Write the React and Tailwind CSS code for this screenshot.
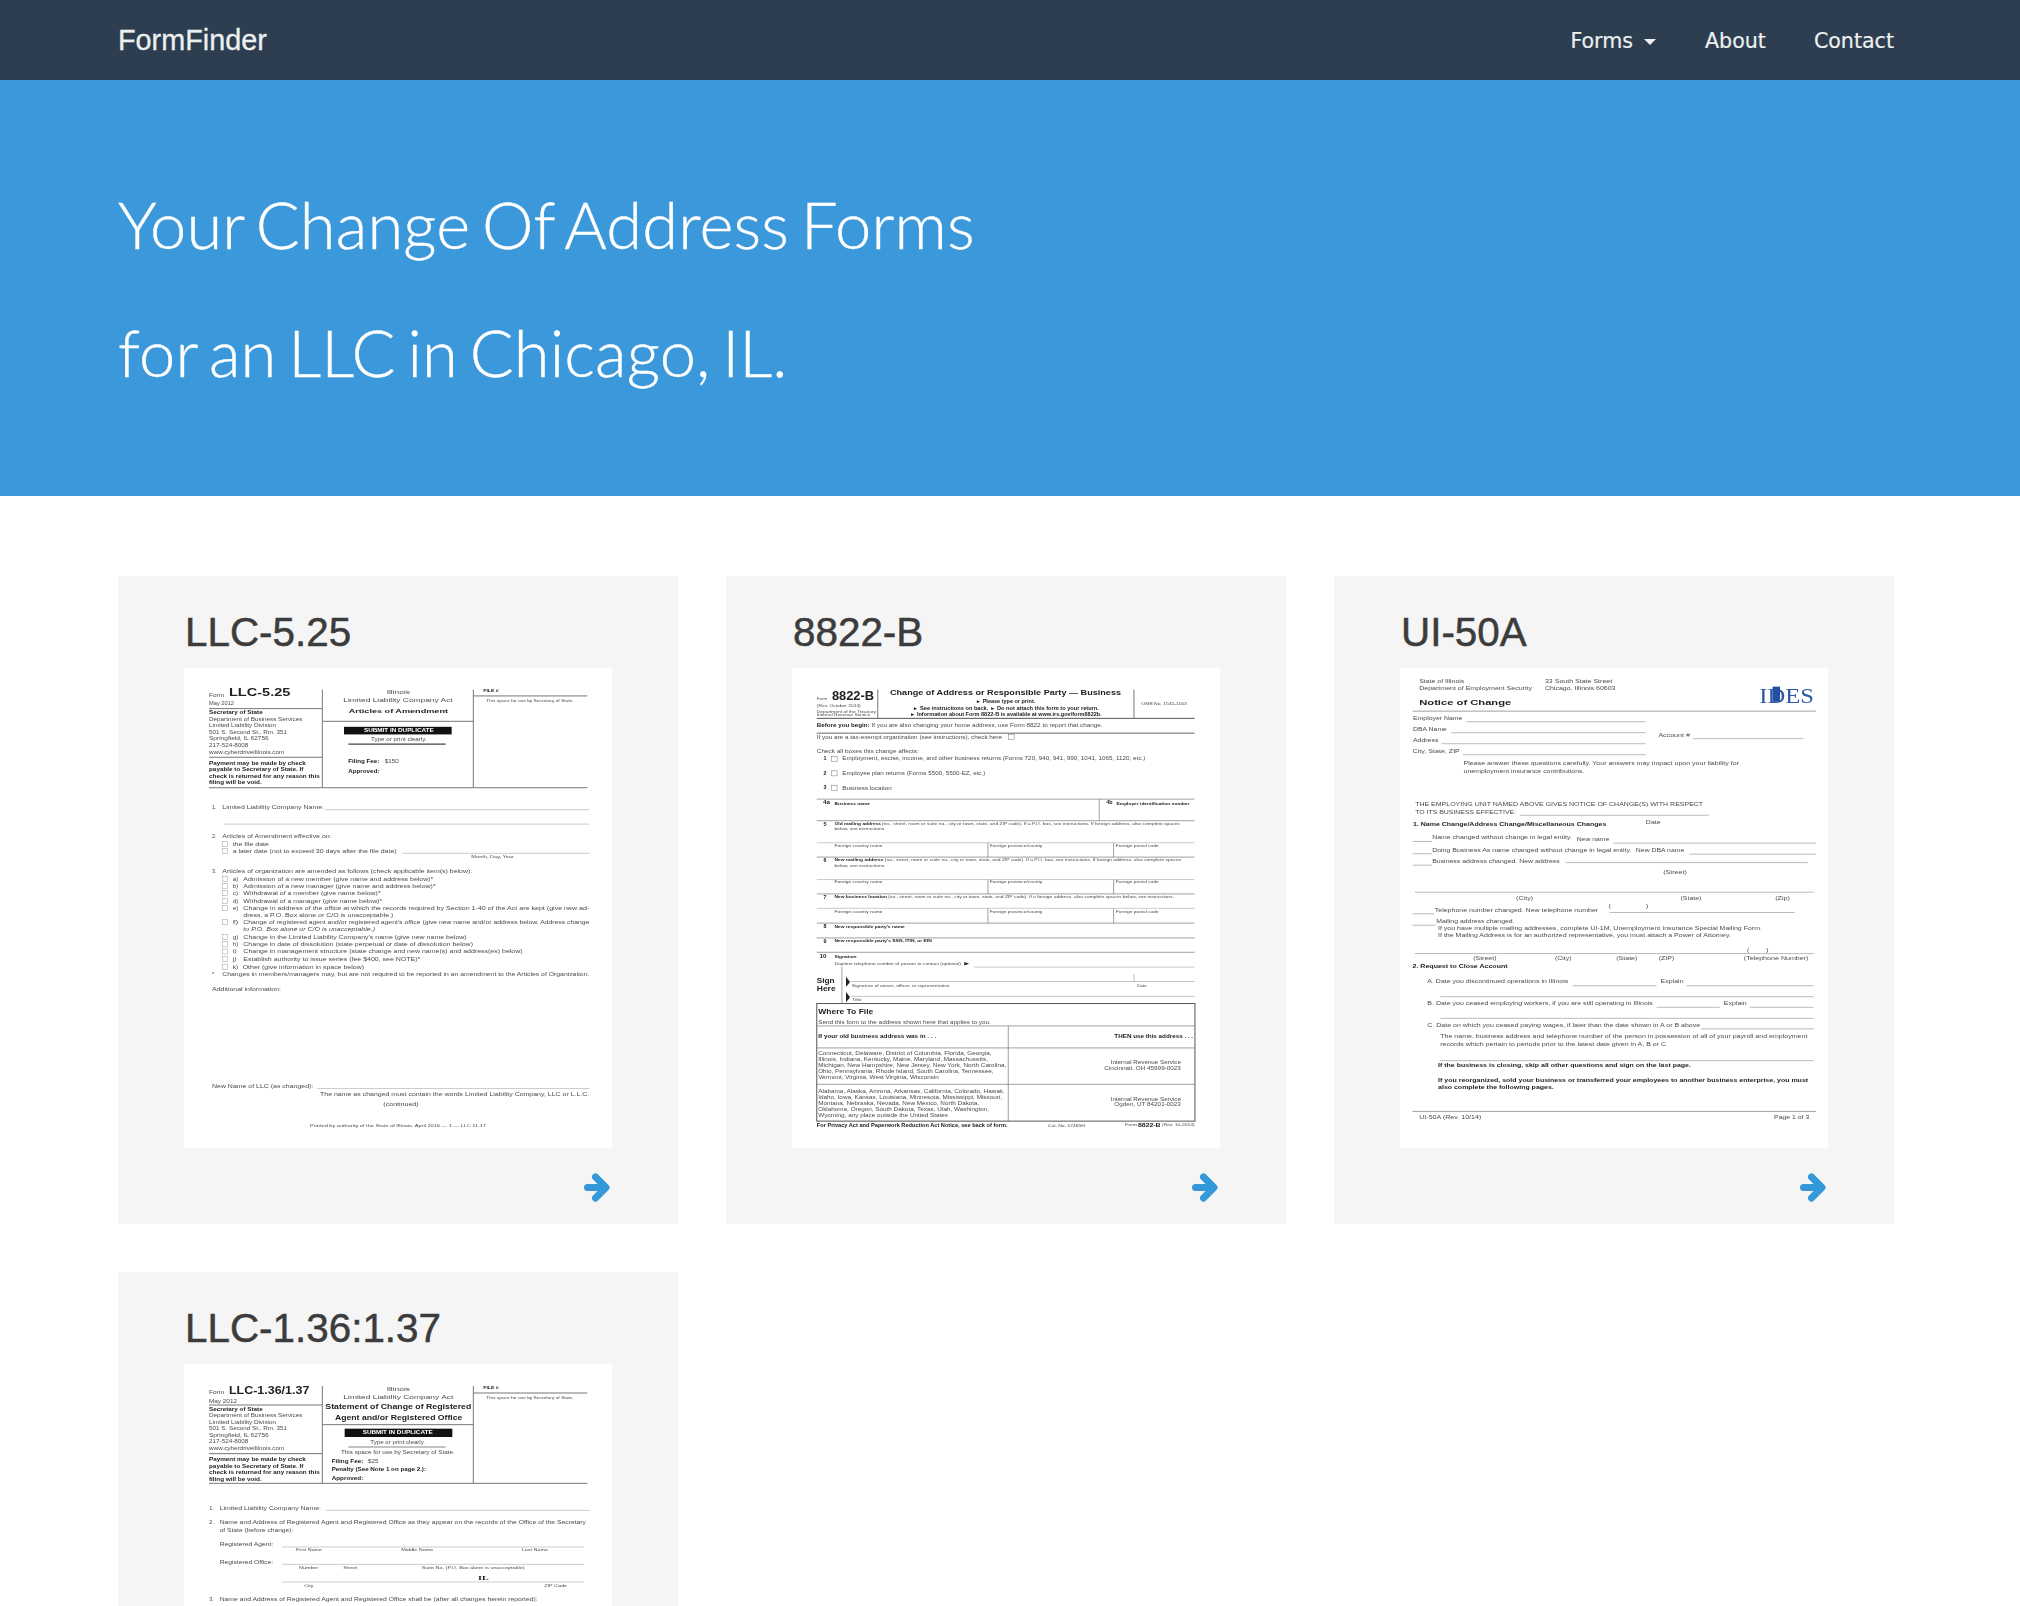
import React from "react";

const T = (a, b, y, s, o = {}) => ({ k: "t", a, b, y, s, ...o });
const H = (a, b, y, w = 1, c = "#777") => ({ k: "h", a, b, y, w, c });
const V = (x, a, b, w = 1, c = "#777") => ({ k: "v", x, a, b, w, c });
const R = (a, b, y1, y2, f = "#111") => ({ k: "r", a, b, y1, y2, f });
const BOX = (a, b, y1, y2, w = 1, c = "#888") => ({ k: "b", a, b, y1, y2, w, c });
const TRI = (a, b, y1, y2) => ({ k: "p", a, b, y1, y2 });
const bd = { bold: 1 };

const leftBlock = (ys) => [
  T(297, 458, ys[0], "Secretary of State", bd),
  T(297, 577, ys[1], "Department of Business Services"),
  T(297, 498, ys[2], "Limited Liability Division"),
  T(297, 531, ys[3], "501 S. Second St., Rm. 351"),
  T(297, 476, ys[4], "Springfield, IL  62756"),
  T(297, 415, ys[5], "217-524-8008"),
  T(297, 523, ys[6], "www.cyberdriveillinois.com"),
  T(297, 587, ys[7], "Payment may be made by check", bd),
  T(297, 580, ys[8], "payable to Secretary of State. If", bd),
  T(297, 629, ys[9], "check is returned for any reason this", bd),
  T(297, 455, ys[10], "filing will be void.", bd),
];

const chk = (y, x = 338, w = 14) => BOX(x, x + w, y - 6, y + 6, 0.5, "#999");

const doc1 = [
  T(297, 342, 298, "Form"),
  T(357, 541, 292, "LLC-5.25", { bold: 1, z: 11 }),
  T(297, 372, 316, "May 2012"),
  V(637, 285, 517), V(1090, 285, 517),
  H(297, 637, 330), H(637, 1090, 360), H(297, 637, 445), H(297, 1432, 517), H(1090, 1432, 300),
  ...leftBlock([339, 355, 369, 385, 401, 417, 433, 458, 474, 490, 505]),
  T(830, 900, 291, "Illinois"),
  T(700, 1028, 310, "Limited Liability Company Act"),
  T(716, 1014, 337, "Articles of Amendment", bd),
  R(702, 1025, 373, 391),
  T(762, 971, 382, "SUBMIT IN DUPLICATE", { bold: 1, c: "#fff", z: 5 }),
  T(783, 950, 402, "Type or print clearly."),
  H(715, 1007, 414, 1.2, "#444"),
  T(715, 808, 454, "Filing Fee:", bd), T(824, 866, 454, "$150"),
  T(715, 808, 479, "Approved:", bd),
  T(1120, 1166, 288, "FILE #", { bold: 1, z: 4 }),
  T(1129, 1391, 312, "This space for use by Secretary of State.", { z: 4 }),
  T(306, 320, 563, "1."), T(337, 642, 563, "Limited Liability Company Name:"),
  H(646, 1438, 569, 0.5, "#999"), H(342, 1438, 603, 0.5, "#999"),
  T(306, 320, 632, "2."), T(337, 665, 632, "Articles of Amendment effective on:"),
  chk(650), T(368, 477, 650, "the file date"),
  chk(667), T(368, 860, 667, "a later date (not to exceed 30 days after the file date)"),
  H(878, 1438, 672, 0.5, "#999"), T(1084, 1212, 681, "Month, Day, Year", { z: 4 }),
  T(306, 320, 714, "3."), T(337, 1087, 714, "Articles of organization are amended as follows (check applicable item(s) below):"),
  chk(732), T(368, 385, 732, "a)"), T(400, 970, 732, "Admission of a new member (give name and address below)*"),
  chk(749), T(368, 385, 749, "b)"), T(400, 977, 749, "Admission of a new manager (give name and address below)*"),
  chk(766), T(368, 385, 766, "c)"), T(400, 812, 766, "Withdrawal of a member (give name below)*"),
  chk(784), T(368, 385, 784, "d)"), T(400, 817, 784, "Withdrawal of a manager (give name below)*"),
  chk(801), T(368, 385, 801, "e)"), T(400, 1438, 801, "Change in address of the office at which the records required by Section 1-40 of the Act are kept (give new ad-"),
  T(400, 850, 818, "dress, a P.O. Box alone or C/O is unacceptable.)"),
  chk(835), T(368, 385, 835, "f)"), T(400, 1438, 835, "Change of registered agent and/or registered agent's office (give new name and/or address below. Address change"),
  T(400, 795, 852, "to P.O. Box alone or C/O is unacceptable.)", { i: 1 }),
  chk(870), T(368, 385, 870, "g)"), T(400, 1070, 870, "Change in the Limited Liability Company's name (give new name below)"),
  chk(887), T(368, 385, 887, "h)"), T(400, 1089, 887, "Change in date of dissolution (state perpetual or date of dissolution below)"),
  chk(904), T(368, 380, 904, "i)"), T(400, 1238, 904, "Change in management structure (state change and new name(s) and address(es) below)"),
  chk(922), T(368, 380, 922, "j)"), T(400, 931, 922, "Establish authority to issue series (fee $400, see NOTE)*"),
  chk(940), T(368, 385, 940, "k)"), T(398, 762, 940, "Other (give information in space below)"),
  T(306, 313, 958, "*"), T(337, 1438, 958, "Changes in members/managers may, but are not required to be reported in an amendment to the Articles of Organization."),
  T(306, 513, 992, "Additional information:"),
  T(306, 610, 1222, "New Name of LLC (as changed):"), H(622, 1438, 1228, 0.5, "#999"),
  T(630, 1438, 1241, "The name as changed must contain the words Limited Liability Company, LLC or L.L.C."),
  T(820, 926, 1265, "(continued)"),
  T(600, 1128, 1316, "Printed by authority of the State of Illinois. April 2016 — 1 — LLC 11.17", { z: 4 }),
];

const foreignRow = (yLine, yT, yEnd) => [
  H(262, 1284, yLine, 0.5, "#999"),
  T(310, 440, yT, "Foreign country name", { z: 4 }),
  V(725, yLine, yEnd, 0.7),
  T(730, 872, yT, "Foreign province/county", { z: 4 }),
  V(1065, yLine, yEnd, 0.7),
  T(1071, 1187, yT, "Foreign postal code", { z: 4 }),
  H(262, 1284, yEnd, 0.7, "#777"),
];

const doc2 = [
  T(262, 290, 306, "Form", { z: 4 }),
  T(303, 417, 299, "8822-B", { bold: 1, z: 12 }),
  V(427, 285, 352), V(1120, 285, 352),
  T(262, 381, 322, "(Rev. October 2014)", { z: 4 }),
  T(262, 422, 336, "Department of the Treasury", { z: 4 }),
  T(262, 407, 345, "Internal Revenue Service", { z: 4 }),
  T(460, 1085, 292, "Change of Address or Responsible Party — Business", { bold: 1, z: 8 }),
  T(692, 853, 313, "► Please type or print.", { bold: 1, z: 4.6 }),
  T(522, 1025, 329, "► See instructions on back.   ► Do not attach this form to your return.", { bold: 1, z: 4.6 }),
  T(514, 1033, 344, "► Information about Form 8822-B is available at www.irs.gov/form8822b.", { bold: 1, z: 4.6 }),
  T(1140, 1263, 318, "OMB No. 1545-1163", { z: 4 }),
  H(262, 1284, 353, 1, "#555"),
  T(262, 405, 369, "Before you begin:", bd),
  T(410, 1035, 369, "If you are also changing your home address, use Form 8822 to report that change."),
  H(262, 1284, 388, 1, "#666"),
  T(262, 763, 397, "If you are a tax-exempt organization (see instructions), check here"),
  BOX(780, 796, 391, 403, 0.5, "#777"),
  T(262, 538, 431, "Check all boxes this change affects:"),
  T(280, 288, 447, "1", bd), BOX(302, 317, 443, 455, 0.5, "#777"),
  T(331, 1151, 448, "Employment, excise, income, and other business returns (Forms 720, 940, 941, 990, 1041, 1065, 1120, etc.)"),
  T(280, 288, 482, "2", bd), BOX(302, 317, 477, 489, 0.5, "#777"),
  T(331, 718, 483, "Employee plan returns (Forms 5500, 5500-EZ, etc.)"),
  T(280, 288, 516, "3", bd), BOX(302, 317, 511, 523, 0.5, "#777"),
  T(331, 465, 517, "Business location"),
  H(262, 1284, 544, 0.7),
  T(279, 298, 552, "4a", { bold: 1, z: 4.5 }), T(310, 406, 554, "Business name", { bold: 1, z: 4 }),
  V(1026, 544, 595, 0.7),
  T(1045, 1062, 552, "4b", { bold: 1, z: 4.5 }), T(1073, 1270, 554, "Employer identification number", { bold: 1, z: 4 }),
  H(262, 1284, 595, 0.7),
  T(280, 288, 602, "5", bd), T(310, 436, 602, "Old mailing address", { bold: 1, z: 4 }),
  T(438, 1244, 602, "(no., street, room or suite no., city or town, state, and ZIP code). If a P.O. box, see instructions. If foreign address, also complete spaces", { z: 4 }),
  T(310, 448, 614, "below, see instructions.", { z: 4 }),
  ...foreignRow(647, 653, 681),
  T(280, 288, 688, "6", bd), T(310, 442, 688, "New mailing address", { bold: 1, z: 4 }),
  T(446, 1248, 688, "(no., street, room or suite no., city or town, state, and ZIP code). If a P.O. box, see instructions. If foreign address, also complete spaces", { z: 4 }),
  T(310, 448, 700, "below, see instructions.", { z: 4 }),
  ...foreignRow(734, 740, 768),
  T(280, 288, 775, "7", bd), T(310, 452, 775, "New business location", { bold: 1, z: 4 }),
  T(455, 1228, 775, "(no., street, room or suite no., city or town, state, and ZIP code). If a foreign address, also complete spaces below, see instructions.", { z: 4 }),
  ...foreignRow(802, 809, 837),
  T(280, 288, 845, "8", bd), T(310, 500, 845, "New responsible party's name", { bold: 1, z: 4 }),
  H(262, 1284, 872, 0.7),
  T(280, 288, 879, "9", bd), T(310, 573, 879, "New responsible party's SSN, ITIN, or EIN", { bold: 1, z: 4 }),
  H(262, 1284, 906, 0.7),
  T(270, 288, 915, "10", bd), T(310, 370, 917, "Signature", { bold: 1, z: 4 }),
  T(310, 652, 933, "Daytime telephone number of person to contact (optional)", { z: 4 }),
  TRI(661, 674, 929, 937),
  H(686, 1284, 941, 0.5, "#999"),
  T(262, 310, 973, "Sign", { bold: 1, z: 7 }), T(262, 313, 991, "Here", { bold: 1, z: 7 }),
  V(330, 941, 1027, 0.7),
  TRI(341, 352, 964, 988), H(355, 1284, 975, 0.5, "#888"), V(1120, 958, 975, 0.5),
  T(357, 621, 984, "Signature of owner, officer, or representative", { z: 3.6 }), T(1129, 1155, 984, "Date", { z: 3.6 }),
  TRI(341, 352, 1000, 1024), H(355, 1284, 1010, 0.5, "#888"), T(358, 383, 1018, "Title", { z: 3.6 }),
  BOX(262, 1285, 1027, 1305, 1, "#555"),
  T(266, 415, 1046, "Where To File", { bold: 1, z: 6.5 }),
  T(266, 733, 1071, "Send this form to the address shown here that applies to you."),
  H(262, 1285, 1080, 0.7), V(780, 1080, 1305, 0.7),
  T(266, 585, 1104, "If your old business address was in . . .", bd),
  T(1067, 1280, 1104, "THEN use this address . . .", bd),
  H(262, 1285, 1132, 0.7),
  T(266, 735, 1144, "Connecticut, Delaware, District of Columbia, Florida, Georgia,"),
  T(266, 725, 1158, "Illinois, Indiana, Kentucky, Maine, Maryland, Massachusetts,"),
  T(266, 775, 1172, "Michigan, New Hampshire, New Jersey, New York, North Carolina,"),
  T(266, 740, 1186, "Ohio, Pennsylvania, Rhode Island, South Carolina, Tennessee,"),
  T(266, 592, 1200, "Vermont, Virginia, West Virginia, Wisconsin"),
  T(1057, 1247, 1166, "Internal Revenue Service"), T(1040, 1247, 1179, "Cincinnati, OH 45999-0023"),
  H(262, 1285, 1218, 0.7),
  T(266, 770, 1234, "Alabama, Alaska, Arizona, Arkansas, California, Colorado, Hawaii,"),
  T(266, 763, 1248, "Idaho, Iowa, Kansas, Louisiana, Minnesota, Mississippi, Missouri,"),
  T(266, 702, 1262, "Montana, Nebraska, Nevada, New Mexico, North Dakota,"),
  T(266, 728, 1276, "Oklahoma, Oregon, South Dakota, Texas, Utah, Washington,"),
  T(266, 617, 1290, "Wyoming, any place outside the United States"),
  T(1057, 1247, 1252, "Internal Revenue Service"), T(1067, 1247, 1265, "Ogden, UT 84201-0023"),
  T(262, 778, 1314, "For Privacy Act and Paperwork Reduction Act Notice, see back of form.", bd),
  T(887, 987, 1315, "Cat. No. 57465H", { z: 4 }),
  T(1096, 1128, 1314, "Form", { z: 4 }), T(1131, 1192, 1313, "8822-B", { bold: 1, z: 6 }), T(1196, 1284, 1314, "(Rev. 10-2014)", { z: 4 }),
];

const blank = (a, y) => H(222, a, y, 0.5, "#777");
const ln = (a, b, y) => H(a, b, y, 0.5, "#777");

const doc3 = [
  T(240, 362, 265, "State of Illinois"),
  T(240, 545, 282, "Department of Employment Security"),
  T(580, 762, 265, "33 South State Street"),
  T(580, 771, 282, "Chicago, Illinois 60603"),
  T(240, 489, 315, "Notice of Change", { bold: 1, z: 8 }),
  T(1160, 1308, 300, "IDES", { f: "'Liberation Serif', serif", z: 21, c: "#2a5aa8" }),
  R(1196, 1216, 278, 314, "#24509f"),
  H(222, 1313, 336, 0.7),
  T(223, 357, 352, "Employer Name"), ln(367, 853, 361),
  T(223, 315, 378, "DBA Name"), ln(326, 853, 387),
  T(223, 292, 405, "Address"), ln(300, 853, 413),
  T(222, 350, 431, "City, State, ZIP"), ln(358, 853, 439),
  T(887, 972, 392, "Account #"), ln(981, 1279, 401),
  T(360, 1105, 459, "Please answer these questions carefully. Your answers may impact upon your liability for"),
  T(360, 687, 477, "unemployment insurance contributions."),
  T(229, 1008, 557, "THE EMPLOYING UNIT NAMED ABOVE GIVES NOTICE OF CHANGE(S) WITH RESPECT"),
  T(229, 502, 574, "TO ITS BUSINESS EFFECTIVE:"), ln(512, 1024, 582),
  T(223, 746, 602, "1. Name Change/Address Change/Miscellaneous Changes", bd),
  T(853, 893, 598, "Date"),
  blank(274, 644), T(275, 653, 635, "Name changed without change in legal entity."),
  T(666, 754, 638, "New name"), ln(765, 1313, 648),
  blank(274, 673), T(275, 814, 664, "Doing Business As name changed without change in legal entity."),
  T(826, 957, 664, "New DBA name"), ln(971, 1313, 674),
  blank(274, 700), T(275, 620, 690, "Business address changed. New address"), ln(636, 1291, 694),
  T(900, 964, 717, "(Street)"),
  ln(228, 1307, 764),
  T(502, 548, 778, "(City)"), T(947, 1003, 778, "(State)"), T(1203, 1243, 778, "(Zip)"),
  blank(280, 815), T(282, 724, 807, "Telephone number changed. New telephone number"),
  T(752, 758, 797, "("), T(853, 860, 797, ")"), ln(755, 1256, 812),
  blank(285, 842), T(286, 498, 832, "Mailing address changed."),
  T(291, 1167, 849, "If you have multiple mailing addresses, complete UI-1M, Unemployment Insurance Special Mailing Form."),
  T(291, 1083, 866, "If the Mailing Address is for an authorized representative, you must attach a Power of Attorney."),
  T(1127, 1133, 902, "("), T(1178, 1185, 902, ")"),
  ln(228, 1307, 909),
  T(386, 449, 921, "(Street)"), T(607, 652, 921, "(City)"), T(773, 830, 921, "(State)"), T(888, 930, 921, "(ZIP)"),
  T(1118, 1293, 921, "(Telephone Number)"),
  T(222, 479, 939, "2. Request to Close Account", bd),
  T(262, 643, 975, "A. Date you discontinued operations in Illinois"), ln(655, 882, 985),
  T(893, 955, 975, "Explain"), ln(963, 1307, 985), ln(297, 1307, 1011),
  T(262, 872, 1027, "B. Date you ceased employing workers, if you are still operating in Illinois"), ln(882, 1053, 1036),
  T(1064, 1126, 1027, "Explain"), ln(1134, 1307, 1036), ln(297, 1307, 1062),
  T(262, 1000, 1079, "C. Date on which you ceased paying wages, if later than the date shown in A or B above"), ln(1003, 1307, 1087),
  T(297, 1290, 1105, "The name, business address and telephone number of the person in possession of all of your payroll and employment"),
  T(297, 908, 1123, "records which pertain to periods prior to the latest date given in A, B or C"),
  ln(297, 1307, 1162),
  T(291, 975, 1173, "If the business is closing, skip all other questions and sign on the last page.", bd),
  T(291, 1292, 1208, "If you reorganized, sold your business or transferred your employees to another business enterprise, you must", bd),
  T(291, 604, 1225, "also complete the following pages.", bd),
  H(222, 1313, 1282, 0.7),
  T(240, 408, 1295, "UI-50A (Rev. 10/14)"), T(1200, 1295, 1295, "Page 1 of 3"),
];

const doc4 = [
  T(297, 342, 697, "Form"),
  T(357, 598, 691, "LLC-1.36/1.37", { bold: 1, z: 10 }),
  T(297, 381, 722, "May 2012"),
  V(637, 678, 970), V(1090, 678, 970),
  H(297, 637, 735), H(297, 637, 881), H(637, 1090, 794), H(297, 1432, 970), H(1090, 1432, 699),
  ...leftBlock([746, 766, 785, 804, 824, 844, 864, 897, 917, 937, 956]),
  T(830, 900, 686, "Illinois"),
  T(700, 1030, 711, "Limited Liability Company Act"),
  T(646, 1084, 741, "Statement of Change of Registered", { bold: 1, z: 6.6 }),
  T(675, 1057, 772, "Agent and/or Registered Office", { bold: 1, z: 6.6 }),
  R(704, 1027, 806, 831),
  T(758, 968, 818, "SUBMIT IN DUPLICATE", { bold: 1, c: "#fff", z: 5 }),
  T(781, 945, 845, "Type or print clearly."),
  H(715, 1007, 861, 0.7, "#555"),
  T(693, 1034, 875, "This space for use by Secretary of State."),
  T(665, 760, 902, "Filing Fee:", bd), T(774, 805, 902, "$25"),
  T(665, 948, 928, "Penalty (See Note 1 on page 2.):", bd),
  T(665, 760, 955, "Approved:", bd),
  T(1120, 1166, 682, "FILE #", { bold: 1, z: 4 }),
  T(1129, 1391, 712, "This space for use by Secretary of State.", { z: 4 }),
  T(298, 312, 1044, "1."), T(329, 633, 1044, "Limited Liability Company Name:"), H(648, 1440, 1051, 0.5, "#999"),
  T(298, 312, 1087, "2."),
  T(329, 1428, 1087, "Name and Address of Registered Agent and Registered Office as they appear on the records of the Office of the Secretary"),
  T(329, 550, 1109, "of State (before change):"),
  T(329, 490, 1153, "Registered Agent:"), H(516, 1422, 1161, 0.5, "#999"),
  T(558, 636, 1170, "First Name", { z: 4 }), T(874, 970, 1170, "Middle Name", { z: 4 }), T(1235, 1314, 1170, "Last Name", { z: 4 }),
  T(329, 490, 1206, "Registered Office:"), H(516, 1422, 1213, 0.5, "#999"),
  T(567, 625, 1223, "Number", { z: 4 }), T(700, 742, 1223, "Street", { z: 4 }),
  T(935, 1244, 1223, "Suite No. (P.O. Box alone is unacceptable)", { z: 4 }),
  T(1104, 1136, 1254, "IL", { bold: 1, f: "'Liberation Serif', serif", z: 7 }),
  H(516, 1422, 1266, 0.5, "#999"),
  T(583, 610, 1276, "City", { z: 4 }), T(1303, 1371, 1276, "ZIP Code", { z: 4 }),
  T(298, 312, 1318, "3."),
  T(329, 1283, 1318, "Name and Address of Registered Agent and Registered Office shall be (after all changes herein reported):"),
];

function Doc({ items, sx, sy, ox, oy }) {
  const X = (v) => (v - ox) / sx;
  const Y = (v) => (v - oy) / sy;
  return (
    <svg viewBox="0 0 428 480" className="block w-[428px] h-[480px] bg-white blur-[0.6px]">
      {items.map((it, i) => {
        if (it.k === "t") {
          const z = it.z || 5.4;
          return (
            <text
              key={i}
              x={X(it.a)}
              y={Y(it.y) + z * 0.34}
              fontSize={z}
              fontFamily={it.f || "'Liberation Sans', sans-serif"}
              fontWeight={it.bold ? 700 : 400}
              fontStyle={it.i ? "italic" : "normal"}
              fill={it.c || (it.bold ? "#222" : "#4a4a4a")}
              textLength={X(it.b) - X(it.a)}
              lengthAdjust="spacingAndGlyphs"
            >
              {it.s}
            </text>
          );
        }
        if (it.k === "h") return <line key={i} x1={X(it.a)} x2={X(it.b)} y1={Y(it.y)} y2={Y(it.y)} stroke={it.c} strokeWidth={it.w} />;
        if (it.k === "v") return <line key={i} x1={X(it.x)} x2={X(it.x)} y1={Y(it.a)} y2={Y(it.b)} stroke={it.c} strokeWidth={it.w} />;
        if (it.k === "r") return <rect key={i} x={X(it.a)} y={Y(it.y1)} width={X(it.b) - X(it.a)} height={Y(it.y2) - Y(it.y1)} fill={it.f} />;
        if (it.k === "b") return <rect key={i} x={X(it.a)} y={Y(it.y1)} width={X(it.b) - X(it.a)} height={Y(it.y2) - Y(it.y1)} fill="none" stroke={it.c} strokeWidth={it.w} />;
        if (it.k === "p") return <polygon key={i} points={`${X(it.a)},${Y(it.y1)} ${X(it.b)},${Y((it.y1 + it.y2) / 2)} ${X(it.a)},${Y(it.y2)}`} fill="#222" />;
        return null;
      })}
    </svg>
  );
}

function Arrow() {
  return (
    <svg width="26" height="29" viewBox="0 0 26 29" className="block">
      <path d="M3.5 14.5H21" stroke="#3498db" strokeWidth="7" strokeLinecap="round" fill="none" />
      <path d="M11.5 4L22 14.5L11.5 25" stroke="#3498db" strokeWidth="7" strokeLinecap="round" strokeLinejoin="round" fill="none" />
    </svg>
  );
}

function Card({ title, doc }) {
  return (
    <div className="bg-[#f5f5f5] h-[648px] px-[66px] flex flex-col">
      <h3 className="mt-[33px] h-[59px] pl-[1px] text-[40.4px] leading-[46px] text-[#3c3c3c] font-['Liberation_Sans',sans-serif] [-webkit-text-stroke:0.5px_#3c3c3c]">{title}</h3>
      <Doc {...doc} />
      <div className="mt-[25px] pr-[2px] flex justify-end">
        <Arrow />
      </div>
    </div>
  );
}

const cards = [
  { title: "LLC-5.25", doc: { items: doc1, sx: 3, sy: 2.3636, ox: 222, oy: 234 } },
  { title: "8822-B", doc: { items: doc2, sx: 2.705, sy: 2.3636, ox: 195, oy: 234 } },
  { title: "UI-50A", doc: { items: doc3, sx: 2.705, sy: 2.3636, ox: 188, oy: 234 } },
  { title: "LLC-1.36:1.37", doc: { items: doc4, sx: 3, sy: 3, ox: 222, oy: 612 } },
];

export default function App() {
  return (
    <div className="h-[1606px] overflow-hidden bg-white font-['Lato',sans-serif]">
      <nav className="h-20 bg-[#2c3e50] flex items-center">
        <div className="w-[1776px] ml-[118px] flex items-center justify-between text-[#ecf0f1]">
          <a className="text-[28.8px] mt-[2px] font-['Liberation_Sans',sans-serif] [-webkit-text-stroke:0.3px_#ecf0f1]">FormFinder</a>
          <ul className="flex items-center gap-12 mt-[2px] text-[20.6px] font-['DejaVu_Sans',sans-serif] [-webkit-text-stroke:0.2px_#ecf0f1]">
            <li className="flex items-center gap-[11px] mr-[1px]">
              Forms
              <span className="w-0 h-0 mt-[2px] border-x-[6px] border-x-transparent border-t-[6px] border-t-[#ecf0f1]" />
            </li>
            <li>About</li>
            <li>Contact</li>
          </ul>
        </div>
      </nav>
      <header className="h-[416px] bg-[#3b98da] pt-[80px]">
        <h1 className="ml-[118px] text-[65px] leading-[128px] font-light text-white tracking-[0.15px] [word-spacing:-6px] [-webkit-text-stroke:0.4px_#ffffff]">
          Your Change Of Address Forms
          <br />
          for an LLC in Chicago, IL.
        </h1>
      </header>
      <main className="w-[1776px] ml-[118px] mt-[80px] grid grid-cols-3 gap-x-12 gap-y-12">
        {cards.map((c) => (
          <Card key={c.title} {...c} />
        ))}
      </main>
    </div>
  );
}
